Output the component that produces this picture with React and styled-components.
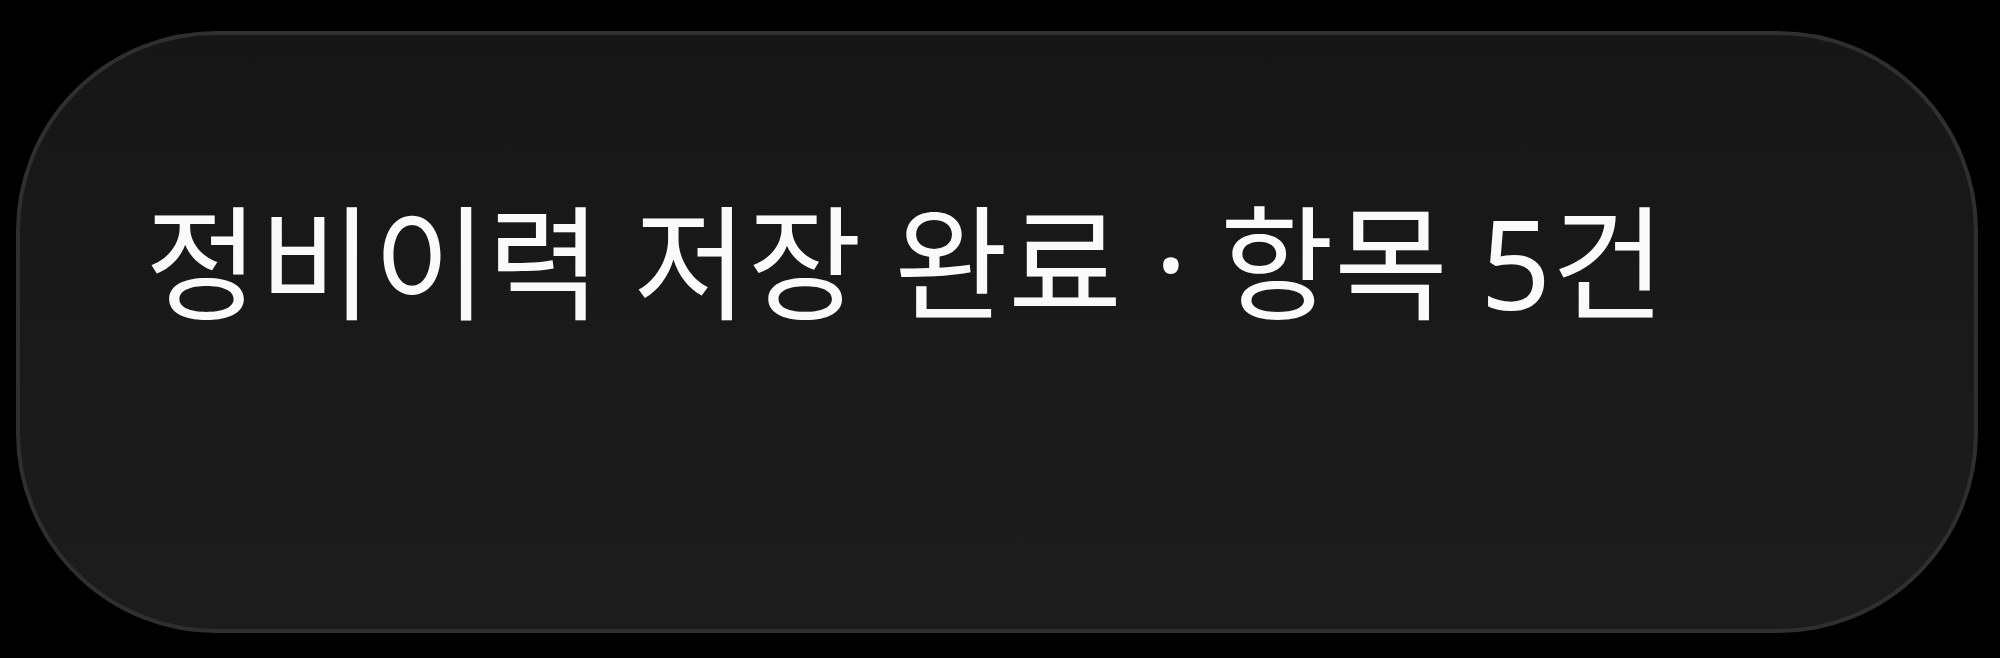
import React from "react";
import styled, { createGlobalStyle } from "styled-components";

const GlobalStyle = createGlobalStyle`
  html, body {
    margin: 0;
    padding: 0;
    background: #000;
  }
  body {
    width: 2000px;
    height: 658px;
    overflow: hidden;
  }
`;

const Stage = styled.div`
  width: 2000px;
  height: 658px;
  box-sizing: border-box;
  padding: 31px 22px 25px 16px;
  display: flex;
`;

const Toast = styled.div`
  flex: 1;
  box-sizing: border-box;
  border: 4px solid #2f2f2f;
  border-radius: 200px;
  background: linear-gradient(180deg, #161616 0%, #1a1a1a 60%, #1c1c1c 100%);
  display: flex;
  align-items: flex-start;
  padding: 165px 0 0 125px;
`;

const Message = styled.p`
  margin: 0;
  font-family: "Noto Sans", "Noto Sans CJK KR", sans-serif;
  font-size: 124px;
  font-weight: 400;
  line-height: 1;
  color: #fafafa;
  white-space: nowrap;
`;

const App = () => {
  return (
    <>
      <GlobalStyle />
      <Stage>
        <Toast>
          <Message>정비이력 저장 완료 · 항목 5건</Message>
        </Toast>
      </Stage>
    </>
  );
};

export default App;
